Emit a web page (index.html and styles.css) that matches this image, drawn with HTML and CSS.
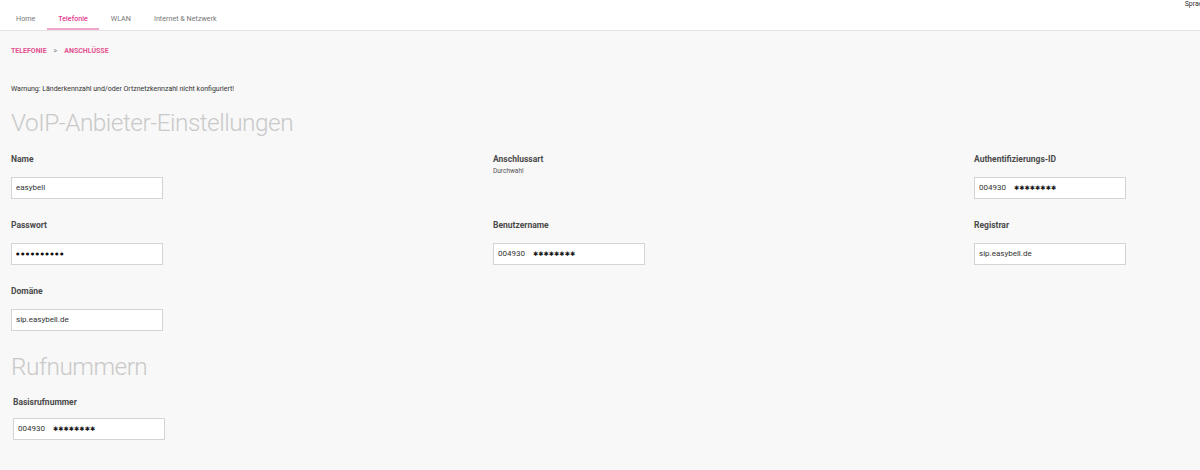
FILE: index.html
```html
<!DOCTYPE html>
<html lang="de">
<head>
<meta charset="utf-8">
<title>Telefonie - Anschlüsse</title>
<link rel="stylesheet" href="styles.css">
</head>
<body>
<div class="page">
  <header class="topbar">
    <div class="util"><span class="lang">Sprache</span></div>
    <nav class="tabs">
      <a class="tab">Home</a>
      <a class="tab active">Telefonie</a>
      <a class="tab">WLAN</a>
      <a class="tab">Internet &amp; Netzwerk</a>
    </nav>
  </header>
  <main class="content">
    <div class="crumbs"><span>TELEFONIE</span><span class="sep">&gt;</span><span>ANSCHLÜSSE</span></div>
    <p class="warning">Warnung: Länderkennzahl und/oder Ortznetzkennzahl nicht konfiguriert!</p>
    <h1 class="heading">VoIP-Anbieter-Einstellungen</h1>
    <div class="grid">
      <div class="field">
        <div class="label">Name</div>
        <div class="input">easybell</div>
      </div>
      <div class="field">
        <div class="label">Anschlussart</div>
        <div class="value">Durchwahl</div>
      </div>
      <div class="field">
        <div class="label">Authentifizierungs-ID</div>
        <div class="input">004930<span class="stars">✱✱✱✱✱✱✱✱</span></div>
      </div>
      <div class="field">
        <div class="label">Passwort</div>
        <div class="input"><span class="dots">●●●●●●●●●●</span></div>
      </div>
      <div class="field">
        <div class="label">Benutzername</div>
        <div class="input">004930<span class="stars">✱✱✱✱✱✱✱✱</span></div>
      </div>
      <div class="field">
        <div class="label">Registrar</div>
        <div class="input">sip.easybell.de</div>
      </div>
      <div class="field">
        <div class="label">Domäne</div>
        <div class="input">sip.easybell.de</div>
      </div>
    </div>
    <h2 class="heading heading-2">Rufnummern</h2>
    <div class="field field-num">
      <div class="label">Basisrufnummer</div>
      <div class="input">004930<span class="stars">✱✱✱✱✱✱✱✱</span></div>
    </div>
  </main>
</div>
</body>
</html>
```
FILE: styles.css
```css
html, body {
  margin: 0;
  padding: 0;
}
body {
  background: #f8f8f8;
  font-family: Roboto, "Liberation Sans", sans-serif;
  color: #333;
  overflow: hidden;
}
.page {
  width: 1460px;
}
.topbar {
  background: #fff;
  border-bottom: 1px solid #e2e2e2;
  height: 30px;
}
.util {
  height: 10px;
  display: flex;
  justify-content: flex-end;
  padding-right: 250px;
}
.lang {
  font-size: 7px;
  line-height: 8px;
  color: #333;
}
.tabs {
  display: flex;
  gap: 1px;
  padding-left: 5px;
}
.tab {
  font-size: 7.2px;
  line-height: 18px;
  padding: 0 11px;
  color: #777;
  border-bottom: 2px solid transparent;
}
.tab.active {
  color: #e20074;
  border-bottom-color: #f3a6cb;
}
.content {
  padding-left: 11px;
}
.crumbs {
  margin-top: 15px;
  font-size: 7px;
  line-height: 10px;
  font-weight: 700;
  color: #e2528f;
  display: flex;
}
.crumbs .sep {
  color: #777;
  font-weight: 400;
  padding: 0 7px;
}
.warning {
  margin: 28px 0 0;
  font-size: 7px;
  line-height: 10px;
  color: #333;
}
.heading {
  margin: 14px 0 0;
  font-size: 24.4px;
  line-height: 30px;
  font-weight: 300;
  letter-spacing: -0.5px;
  color: #c9c9c9;
}
.heading-2 {
  margin-top: 21px;
}
.grid {
  margin-top: 16px;
  display: grid;
  grid-template-columns: 482px 481px 481px;
  row-gap: 21px;
}
.field {
  display: flex;
  flex-direction: column;
}
.label {
  font-size: 8.5px;
  line-height: 10px;
  font-weight: 700;
  color: #4a4a4a;
}
.value {
  margin-top: 3px;
  font-size: 6.5px;
  line-height: 8px;
  color: #555;
}
.input {
  margin-top: 13px;
  box-sizing: border-box;
  width: 152px;
  height: 22px;
  background: #fff;
  border: 1px solid #d4d4d4;
  padding: 0 4px;
  font-size: 8px;
  line-height: 20px;
  color: #333;
  display: flex;
  align-items: center;
  white-space: nowrap;
}
.stars {
  margin-left: 8px;
  font-family: "DejaVu Sans", sans-serif;
  font-size: 6.3px;
  color: #111;
}
.dots {
  font-family: "DejaVu Sans", sans-serif;
  font-size: 4px;
  letter-spacing: 1.4px;
  color: #111;
}
.field-num {
  margin-top: 15px;
  padding-left: 2px;
}
.field-num .input {
  margin-top: 11px;
}
```
